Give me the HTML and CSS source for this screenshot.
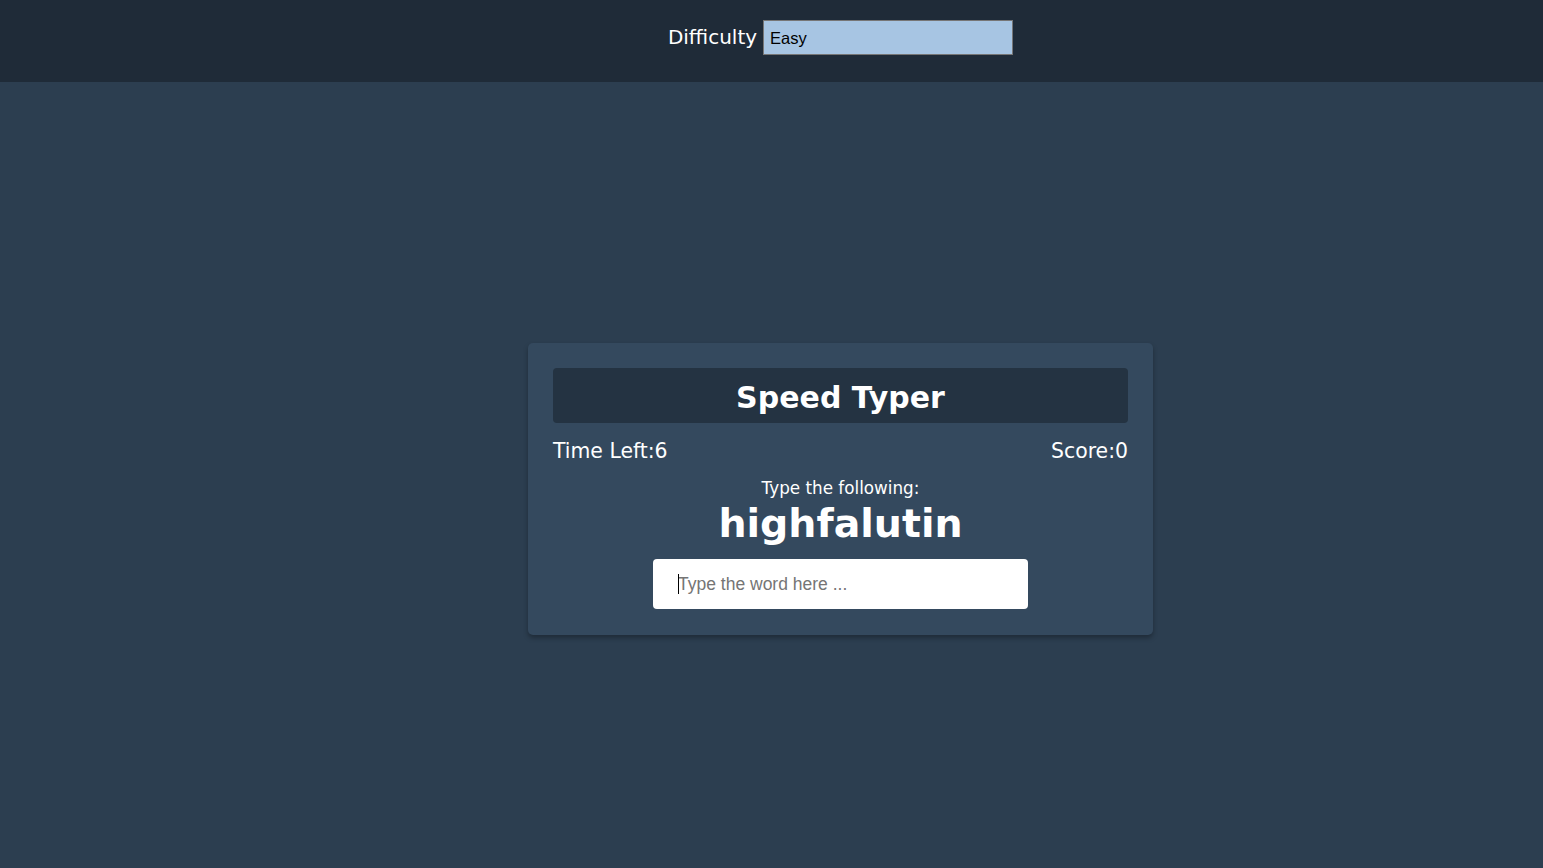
FILE: index.html
```html
<!DOCTYPE html>
<html lang="en">
<head>
<meta charset="UTF-8">
<title>Speed Typer</title>
<link rel="stylesheet" href="styles.css">
</head>
<body>
  <header class="settings">
    <label class="settings-label" for="difficulty">Difficulty</label>
    <select id="difficulty" class="difficulty">
      <option value="easy">Easy</option>
      <option value="medium">Medium</option>
      <option value="hard">Hard</option>
    </select>
  </header>
  <main class="stage">
    <section class="card">
      <h2 class="title">Speed Typer</h2>
      <div class="stats">
        <span class="stat">Time Left:6</span>
        <span class="stat">Score:0</span>
      </div>
      <p class="prompt">Type the following:</p>
      <h1 class="word">highfalutin</h1>
      <div class="entry-wrap">
        <input class="entry" type="text" placeholder="Type the word here ..." autocomplete="off">
        <span class="caret"></span>
      </div>
    </section>
  </main>
</body>
</html>
```
FILE: styles.css
```css
* { box-sizing: border-box; }

html, body {
  margin: 0;
  padding: 0;
}

body {
  background-color: #2c3e50;
  font-family: "DejaVu Sans", Verdana, sans-serif;
  color: #fff;
  min-height: 868px;
}

.settings {
  height: 82px;
  background-color: #1f2b38;
  display: flex;
  align-items: center;
  justify-content: center;
  padding-left: 138px;
  padding-bottom: 7px;
  gap: 6px;
}

.settings-label {
  font-size: 20px;
  color: #fff;
  margin-top: -2px;
}

.difficulty {
  width: 250px;
  height: 35px;
  padding: 0 0 0 6px;
  border: 1px solid #767676;
  border-radius: 0;
  appearance: none;
  -webkit-appearance: none;
  background-color: #a7c5e3;
  font-family: "Liberation Sans", Arial, sans-serif;
  font-size: 16.5px;
  color: #000;
  outline: 0;
}

.stage {
  display: flex;
  justify-content: center;
  padding-left: 138px;
  padding-top: 261px;
}

.card {
  width: 625px;
  background-color: #34495e;
  padding: 25px 25px 26px;
  border-radius: 5px;
  box-shadow: 0 3px 5px rgba(0, 0, 0, 0.3);
  text-align: center;
  display: flex;
  flex-direction: column;
  align-items: center;
}

.title {
  width: 100%;
  margin: 0;
  height: 55px;
  line-height: 60px;
  background-color: #243342;
  border-radius: 4px;
  font-size: 30px;
  font-weight: bold;
}

.stats {
  width: 100%;
  display: flex;
  justify-content: space-between;
  margin-top: 16px;
  font-size: 20.4px;
  line-height: normal;
}

.prompt {
  margin: 15px 0 0;
  font-size: 16.8px;
  line-height: normal;
}

.word {
  margin: 2px 0 0;
  font-size: 39.5px;
  font-weight: bold;
  line-height: normal;
}

.entry-wrap {
  position: relative;
  margin-top: 13px;
  width: 375px;
  height: 50px;
}

.entry {
  display: block;
  width: 375px;
  height: 50px;
  border: 0;
  border-radius: 4px;
  padding: 0 25px;
  font-family: "Liberation Sans", Arial, sans-serif;
  font-size: 17.5px;
  color: #000;
  background: #fff;
  outline: 0;
}

.entry::placeholder {
  color: #757575;
}

.caret {
  position: absolute;
  left: 25px;
  top: 15px;
  width: 1px;
  height: 20px;
  background: #000;
}
```
